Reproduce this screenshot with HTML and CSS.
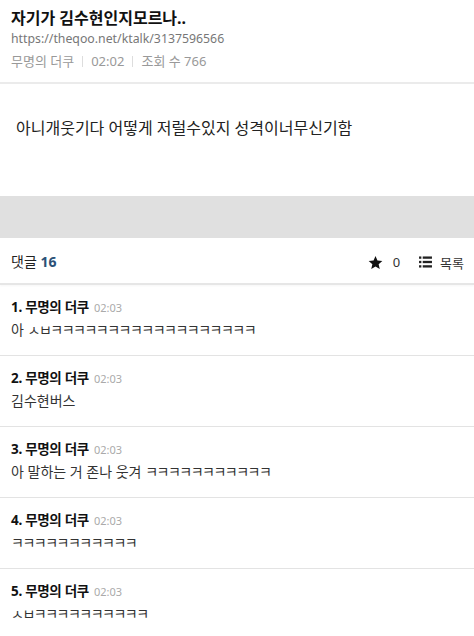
FILE: index.html
```html
<!DOCTYPE html>
<html lang="ko">
<head>
<meta charset="utf-8">
<title>theqoo</title>
<link rel="stylesheet" href="styles.css">
</head>
<body>
<header class="post-head">
  <h1 class="post-title">자기가 김수현인지모르나..</h1>
  <div class="post-url">https://theqoo.net/ktalk/3137596566</div>
  <div class="post-meta"><span>무명의 더쿠</span><span class="sep"></span><span>02:02</span><span class="sep"></span><span>조회 수 766</span></div>
</header>
<main class="post-body">
  <p>아니개웃기다 어떻게 저럴수있지 성격이너무신기함</p>
</main>
<div class="ad-box"></div>
<div class="cmt-bar">
  <div class="cmt-count">댓글 <b>16</b></div>
  <div class="cmt-actions">
    <span class="act act-star"><svg width="15" height="15" viewBox="0 0 24 24"><path d="M12 1.5l3.1 7.2 7.8.7-5.9 5.2 1.8 7.7L12 18.3l-6.8 4 1.8-7.7-5.9-5.2 7.8-.7z" fill="#111"/></svg><span class="num">0</span></span>
    <span class="act act-list"><svg width="13" height="12" viewBox="0 0 14 13"><rect x="0" y="0.5" width="2.5" height="2.5" fill="#222"/><rect x="4" y="0.5" width="10" height="2.5" fill="#222"/><rect x="0" y="5.25" width="2.5" height="2.5" fill="#222"/><rect x="4" y="5.25" width="10" height="2.5" fill="#222"/><rect x="0" y="10" width="2.5" height="2.5" fill="#222"/><rect x="4" y="10" width="10" height="2.5" fill="#222"/></svg><span class="lbl">목록</span></span>
  </div>
</div>
<ul class="cmt-list">
  <li class="cmt"><div class="cmt-head"><b>1. 무명의 더쿠</b><span class="time">02:03</span></div><div class="cmt-text">아 <span class="jamo">ㅅㅂㅋㅋㅋㅋㅋㅋㅋㅋㅋㅋㅋㅋㅋㅋㅋㅋㅋㅋ</span></div></li>
  <li class="cmt"><div class="cmt-head"><b>2. 무명의 더쿠</b><span class="time">02:03</span></div><div class="cmt-text">김수현버스</div></li>
  <li class="cmt"><div class="cmt-head"><b>3. 무명의 더쿠</b><span class="time">02:03</span></div><div class="cmt-text">아 말하는 거 존나 웃겨 <span class="jamo">ㅋㅋㅋㅋㅋㅋㅋㅋㅋㅋㅋ</span></div></li>
  <li class="cmt"><div class="cmt-head"><b>4. 무명의 더쿠</b><span class="time">02:03</span></div><div class="cmt-text"><span class="jamo">ㅋㅋㅋㅋㅋㅋㅋㅋㅋㅋㅋ</span></div></li>
  <li class="cmt"><div class="cmt-head"><b>5. 무명의 더쿠</b><span class="time">02:03</span></div><div class="cmt-text"><span class="jamo">ㅅㅂㅋㅋㅋㅋㅋㅋㅋㅋㅋㅋ</span></div></li>
</ul>
</body>
</html>
```
FILE: styles.css
```css
* { box-sizing: border-box; }
html, body { margin: 0; padding: 0; background: #fff; }
body {
  font-family: "Noto Sans", "Noto Sans CJK KR", sans-serif;
  color: #222;
  overflow: hidden;
}
.post-head {
  padding: 7px 11px 9px;
  border-bottom: 2px solid #ebebeb;
}
.post-title {
  margin: 0;
  font-size: 16px;
  line-height: 22px;
  font-weight: 700;
  color: #111;
}
.post-url {
  font-size: 12.3px;
  line-height: 20px;
  color: #777;
}
.post-meta {
  display: flex;
  align-items: center;
  font-size: 13px;
  line-height: 24px;
  color: #999;
}
.post-meta .sep {
  display: inline-block;
  width: 1px;
  height: 11px;
  background: #ddd;
  margin: 0 8px;
}
.post-body {
  padding: 32px 16px 56px;
}
.post-body p {
  margin: 0;
  font-size: 16px;
  line-height: 24px;
  color: #222;
}
.ad-box {
  height: 42px;
  background: #e0e0e0;
}
.cmt-bar {
  display: flex;
  justify-content: space-between;
  align-items: center;
  padding: 12px 10px 9px 11px;
  border-bottom: 2px solid #e6e6e6;
  box-shadow: 0 1px 2px rgba(0,0,0,0.04);
}
.cmt-count {
  font-size: 14px;
  line-height: 24px;
  color: #222;
}
.cmt-count b {
  font-weight: 700;
  color: #2b5177;
}
.cmt-actions {
  display: flex;
  align-items: center;
  gap: 19px;
}
.act {
  display: flex;
  align-items: center;
  gap: 10px;
  font-size: 13px;
  color: #333;
}
.act-list { gap: 8px; }
.cmt-list {
  list-style: none;
  margin: 0;
  padding: 0;
}
.cmt {
  padding: 11px 11px 13px;
  border-bottom: 1px solid #e3e3e3;
}
.cmt-head {
  height: 22px;
  font-size: 13.5px;
  line-height: 22px;
  color: #111;
  white-space: nowrap;
}
.cmt-head b { font-weight: 700; letter-spacing: -0.3px; }
.cmt-head .time {
  margin-left: 5px;
  font-size: 11px;
  color: #aaa;
}
.cmt-text {
  height: 24px;
  font-size: 14px;
  line-height: 24px;
  color: #333;
}
.jamo { letter-spacing: -1.5px; }
```
